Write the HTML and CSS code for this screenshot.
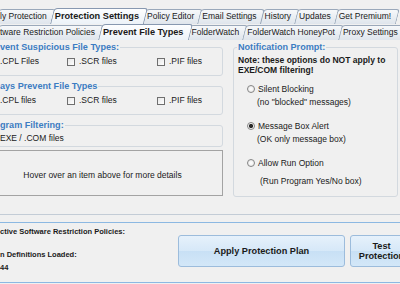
FILE: index.html
```html
<!DOCTYPE html>
<html lang="en">
<head>
    <meta charset="UTF-8">
    <title>Protection Settings</title>
    <link rel="stylesheet" href="styles.css">
</head>
<body>
<div class="tab-strip">
    <div class="tab-row">
        <span class="tab">ly Protection</span>
        <span class="tab active">Protection Settings</span>
        <span class="tab">Policy Editor</span>
        <span class="tab">Email Settings</span>
        <span class="tab">History</span>
        <span class="tab">Updates</span>
        <span class="tab">Get Premium!</span>
    </div>
    <div class="tab-row">
        <span class="tab">tware Restriction Policies</span>
        <span class="tab active">Prevent File Types</span>
        <span class="tab">FolderWatch</span>
        <span class="tab">FolderWatch HoneyPot</span>
        <span class="tab">Proxy Settings</span>
    </div>
</div>

<div class="page">
    <div class="left-col">
        <fieldset class="group">
            <legend>vent Suspicious File Types:</legend>
            <div class="check-row">
                <label class="check"><span class="box"></span>.CPL Files</label>
                <label class="check"><span class="box"></span>.SCR files</label>
                <label class="check"><span class="box"></span>.PIF files</label>
            </div>
        </fieldset>

        <fieldset class="group">
            <legend>ays Prevent File Types</legend>
            <div class="check-row">
                <label class="check"><span class="box"></span>.CPL files</label>
                <label class="check"><span class="box"></span>.SCR files</label>
                <label class="check"><span class="box"></span>.PIF files</label>
            </div>
        </fieldset>

        <fieldset class="group group-small">
            <legend>gram Filtering:</legend>
            <div class="check-row">
                <label class="check"><span class="box"></span>EXE / .COM files</label>
            </div>
        </fieldset>

        <div class="hover-box">Hover over an item above for more details</div>
    </div>

    <div class="right-col">
        <fieldset class="group notify">
            <legend>Notification Prompt:</legend>
            <p class="note">Note: these options do NOT apply to<br>EXE/COM filtering!</p>

            <div class="option first">
                <span class="radio"></span>Silent Blocking
            </div>
            <div class="hint">(no "blocked" messages)</div>

            <div class="option">
                <span class="radio checked"></span>Message Box Alert
            </div>
            <div class="hint">(OK only message box)</div>

            <div class="option">
                <span class="radio"></span>Allow Run Option
            </div>
            <div class="hint hint-last">(Run Program Yes/No box)</div>
        </fieldset>
    </div>
</div>

<div class="status">
    <div class="status-info">
        <div class="status-title">ctive Software Restriction Policies:</div>
        <div class="status-line">n Definitions Loaded:</div>
        <div class="status-line">44</div>
    </div>
    <button class="btn btn-apply">Apply Protection Plan</button>
    <button class="btn btn-test">Test<br>Protection</button>
</div>
</body>
</html>
```

FILE: styles.css
```css
* {
    box-sizing: border-box;
}

body {
    margin: 0;
    width: 400px;
    height: 284px;
    overflow: hidden;
    background: #f0f0f0;
    font-family: "Liberation Sans", Arial, sans-serif;
    font-size: 8.5px;
    color: #1a1a1a;
}

/* tabs */

.tab-strip {
    position: relative;
    z-index: 0;
    padding-top: 8px;
}

.tab-row {
    display: flex;
    height: 16px;
    margin-left: -5px;
    white-space: nowrap;
}

.tab {
    position: relative;
    flex-shrink: 0;
    padding: 0 3px 0 5px;
    line-height: 16px;
}

.tab::before {
    content: '';
    position: absolute;
    top: 1px;
    bottom: 0;
    left: 0;
    right: -2px;
    z-index: -1;
    background: linear-gradient(#f6f8fa, #dfe5ec);
    border: 1px solid #9aa8ba;
    border-bottom: none;
    border-radius: 4px 3px 0 0;
    transform: skewX(-14deg);
    transform-origin: bottom left;
}

.tab.active {
    z-index: 1;
    font-size: 9.2px;
    font-weight: bold;
}

.tab.active::before {
    top: 0;
    background: linear-gradient(#fdfeff, #ecf2f8);
    border-color: #8798b0;
}

/* page */

.page {
    display: flex;
    height: 175px;
    border-bottom: 1px solid #c3ccd6;
}

.left-col {
    flex-shrink: 0;
    width: 241px;
    margin-left: -18px;
    padding-top: 1.5px;
}

.right-col {
    flex-shrink: 0;
    width: 165px;
    margin-left: 10px;
    padding-top: 1.5px;
}

.group {
    margin: 0;
    min-width: 0;
    padding: 3.5px 4px 7.5px 5px;
    border: 1px solid #d3d9df;
    border-radius: 3px;
}

.group + .group {
    margin-top: 5px;
}

.group legend {
    margin-left: 11px;
    padding: 0 1px;
    font-size: 9.1px;
    font-weight: bold;
    line-height: 11px;
    color: #3c7cc2;
}

.group-small {
    margin-top: 6px;
    padding-top: 2px;
    padding-bottom: 2.5px;
}

.check-row {
    display: grid;
    grid-template-columns: 79px 90px auto;
    line-height: 11px;
}

.check {
    display: flex;
    align-items: center;
    gap: 4px;
}

.box {
    width: 8px;
    height: 8px;
    border: 1px solid #6f6f6f;
    background: linear-gradient(135deg, #e6e6e6, #fff);
}

.hover-box {
    height: 46px;
    margin-top: 3px;
    padding-top: 4px;
    display: flex;
    align-items: center;
    justify-content: center;
    border: 1px solid #a3a3a3;
}

/* notification prompt */

.notify {
    padding: 2.5px 4px 9px 4px;
}

.notify legend {
    margin-left: -1px;
}

.note {
    margin: 0;
    font-weight: bold;
    line-height: 10px;
}

.option {
    display: flex;
    align-items: center;
    gap: 3.5px;
    margin: 13px 0 0 8.5px;
    line-height: 11px;
}

.option.first {
    margin-top: 8.5px;
}

.radio {
    width: 8px;
    height: 8px;
    border: 1px solid #858585;
    border-radius: 50%;
    background: radial-gradient(circle, #fff, #e4e4e4);
}

.radio.checked {
    background: radial-gradient(circle, #2a2a2a 0 1.8px, #f2f2f2 2.4px);
}

.hint {
    margin: 2px 0 0 19px;
    line-height: 11px;
}

.hint-last {
    margin: 7px 0 0 22px;
}

/* status bar */

.status {
    display: flex;
    align-items: flex-start;
    height: 61px;
    margin-top: 7px;
    border-top: 1px solid #8cb8e2;
    border-bottom: 1px solid #8cb8e2;
    overflow: hidden;
}

.status-info {
    flex-shrink: 0;
    width: 178px;
    padding-top: 4px;
    font-size: 7.5px;
    font-weight: bold;
}

.status-title {
    line-height: 10px;
    margin-bottom: 10.5px;
}

.status-line {
    line-height: 13px;
}

.btn {
    flex-shrink: 0;
    height: 32px;
    margin-top: 12px;
    padding: 0;
    border: 1px solid #9cbcdc;
    border-radius: 3px;
    background: linear-gradient(#e6f1fb, #d6e8f8 50%, #c8e0f5 51%, #d3e7f8);
    font-family: inherit;
    font-size: 9.2px;
    font-weight: bold;
    color: #1a1a1a;
    line-height: 10px;
}

.btn-apply {
    width: 167px;
}

.btn-test {
    width: 63px;
    margin-left: 5px;
}
```
